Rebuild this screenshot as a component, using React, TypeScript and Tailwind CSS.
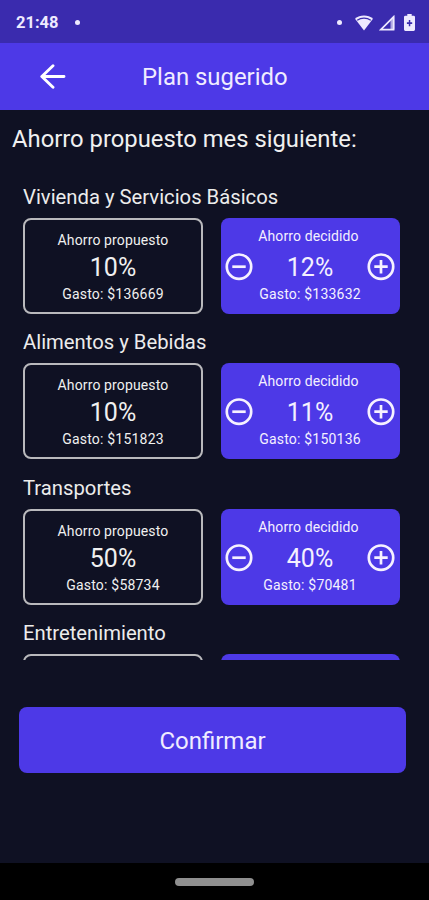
type Saving = { percent: string; spend: string };

type Category = {
  name: string;
  proposed?: Saving;
  decided?: Saving;
};

const categories: Category[] = [
  {
    name: 'Vivienda y Servicios Básicos',
    proposed: { percent: '10%', spend: '$136669' },
    decided: { percent: '12%', spend: '$133632' },
  },
  {
    name: 'Alimentos y Bebidas',
    proposed: { percent: '10%', spend: '$151823' },
    decided: { percent: '11%', spend: '$150136' },
  },
  {
    name: 'Transportes',
    proposed: { percent: '50%', spend: '$58734' },
    decided: { percent: '40%', spend: '$70481' },
  },
  { name: 'Entretenimiento' },
];

function StatusBar() {
  return (
    <div className="flex h-[43px] shrink-0 items-center bg-[#3a2bae] pt-[2px] pr-[14px] pl-4 text-[#eeeaff]">
      <span className="text-[16.5px] leading-5 font-bold">21:48</span>
      <span className="ml-[16px] size-[5px] rounded-full bg-[#eeeaff]" />
      <span className="ml-auto size-[5px] rounded-full bg-[#eeeaff]" />
      <svg className="mr-[6px] ml-[13px] h-[16px] w-[18px]" viewBox="0 0 18 16">
        <path d="M9 .5C5.6.5 2.6 1.6 0 3.7L9 15.5 18 3.7C15.4 1.6 12.4.5 9 .5Z" fill="currentColor" />
        <path d="M2.2 5.2C6.2 2.5 11.8 2.5 15.8 5.2" fill="none" stroke="#3a2bae" strokeWidth="1.2" />
      </svg>
      <svg className="h-[16px] w-[16px]" viewBox="0 0 16 16">
        <path d="M1.8 14.6 14.6 1.8V14.6Z" fill="none" stroke="currentColor" strokeWidth="1.7" />
        <path d="M11.5 5V14.5H15.4V1Z" fill="currentColor" opacity=".65" />
      </svg>
      <svg className="ml-[9px] h-[17px] w-[11px]" viewBox="0 0 11 17">
        <path d="M3.3 0H7.7V1.7H9.6Q11 1.7 11 3.1V15.6Q11 17 9.6 17H1.4Q0 17 0 15.6V3.1Q0 1.7 1.4 1.7H3.3Z" fill="currentColor" />
        <path d="M4.8 6V8.2H2.9V10H4.8V12.3H6.3V10H8.2V8.2H6.3V6Z" fill="#3a2bae" />
      </svg>
    </div>
  );
}

function StepIcon({ plus = false }: { plus?: boolean }) {
  return (
    <svg className="size-7" viewBox="0 0 28 28" fill="none" stroke="#f6f1ff" strokeWidth="2.7">
      <circle cx="14" cy="13.7" r="12.2" />
      <path d={plus ? 'M7.3 13.7H20.7M14 7V20.4' : 'M7.3 13.7H20.7'} />
    </svg>
  );
}

function CategoryRow({ category }: { category: Category }) {
  const { name, proposed, decided } = category;
  return (
    <section className="h-[145.3px] shrink-0">
      <h2 className="flex h-[49.3px] items-end pb-[9px] text-[20.25px] leading-6 whitespace-nowrap text-[#ececec]">
        {name}
      </h2>
      <div className="flex gap-[18px]">
        <div className="flex h-24 w-[180px] flex-col items-center rounded-lg border-2 border-[#b9b9bc] pt-[11px] text-[#f0f0f0]">
          {proposed && (
            <>
              <span className="text-[14px] leading-[18px] tracking-[0.13px]">Ahorro propuesto</span>
              <span className="mt-[4px] text-[25px] leading-[30px]">{proposed.percent}</span>
              <span className="mt-[2px] text-[14px] leading-[18px] tracking-[0.2px]">Gasto: {proposed.spend}</span>
            </>
          )}
        </div>
        <div className="flex h-24 w-[179px] items-center justify-between rounded-lg bg-[#4d39e7] pr-[5px] pl-[4px] text-[#f4f0ff]">
          {decided && (
            <>
              <button className="size-7 shrink-0 pt-px" aria-label="Disminuir">
                <StepIcon />
              </button>
              <div className="flex flex-col items-center pb-[2px]">
                <span className="pr-[3px] text-[14px] leading-[18px] tracking-[0.1px]">Ahorro decidido</span>
                <span className="mt-[8px] text-[25px] leading-[30px]">{decided.percent}</span>
                <span className="mt-[2px] text-[14px] leading-[18px] tracking-[0.2px]">Gasto: {decided.spend}</span>
              </div>
              <button className="size-7 shrink-0 pt-px" aria-label="Aumentar">
                <StepIcon plus />
              </button>
            </>
          )}
        </div>
      </div>
    </section>
  );
}

export default function App() {
  return (
    <div className="flex h-[900px] w-[429px] flex-col overflow-hidden bg-[#0f1123] font-['Roboto',sans-serif]">
      <StatusBar />
      <header className="flex h-[67px] shrink-0 items-center bg-[#4d39e7] pl-[39px] text-[#f0ecff]">
        <svg className="h-[26px] w-[28px]" viewBox="0 0 28 26" fill="none" stroke="#fff" strokeWidth="2.9" strokeLinecap="round" strokeLinejoin="round">
          <path d="M25 12.5H3M14 1.8 2.8 12.5 14 23.2" />
        </svg>
        <h1 className="ml-[75px] text-[23.9px] leading-7">Plan sugerido</h1>
      </header>
      <main className="flex min-h-0 flex-1 flex-col">
        <p className="mt-[14px] ml-3 h-[30px] text-[23.8px] leading-[30px] whitespace-nowrap text-[#f0f0f0]">
          Ahorro propuesto mes siguiente:
        </p>
        <div className="mt-[14.7px] flex h-[491.6px] shrink-0 flex-col overflow-hidden pl-[23px]">
          {categories.map((category) => (
            <CategoryRow key={category.name} category={category} />
          ))}
        </div>
        <button className="mt-[47.2px] ml-[19px] h-[66px] w-[387px] shrink-0 rounded-lg bg-[#4d39e7] pt-[2px] text-[24px] leading-[30px] text-[#f0ecff]">
          Confirmar
        </button>
      </main>
      <footer className="flex h-[37px] shrink-0 items-center justify-center bg-black">
        <span className="h-2 w-[79px] rounded-full bg-[#8f8f8f]" />
      </footer>
    </div>
  );
}
